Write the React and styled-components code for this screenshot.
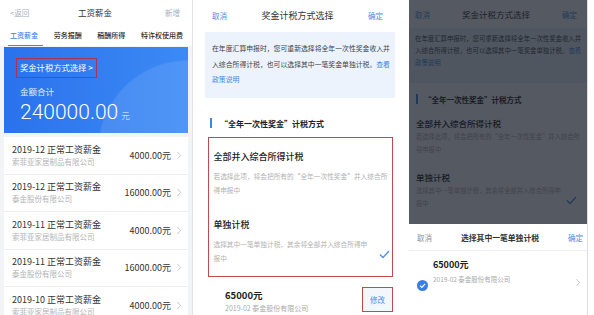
import React from 'react'
import styled, { createGlobalStyle } from 'styled-components'

const GlobalStyle = createGlobalStyle`
  html, body { margin: 0; padding: 0; background: #fff; }
  body { font-family: "Noto Sans CJK SC", "Noto Sans", sans-serif; }
`

const BLUE = '#3d86e6'
const MARK = '#bf4b50'

const Page = styled.div`
  width: 594px;
  height: 315px;
  overflow: hidden;
  display: flex;
  background: #fff;
`

const Line = styled.span`
  display: block;
  white-space: nowrap;
`

const Link = styled.span`
  color: ${BLUE};
`

/* ---------- shared nav ---------- */
const NavBar = styled.div`
  height: ${p => p.$h}px;
  flex-shrink: 0;
  display: grid;
  grid-template-columns: 1fr auto 1fr;
  align-items: center;
  padding: ${p => p.$pad};
  background: #fff;
  border-bottom: ${p => p.$line ? '1px solid #eee' : 'none'};
`

const NavSide = styled.span`
  font-size: 7.5px;
  color: ${p => p.$color};
  justify-self: ${p => p.$end ? 'end' : 'start'};
  white-space: nowrap;
`

const NavTitle = styled.span`
  font-size: ${p => p.$size}px;
  color: #333;
  font-weight: ${p => p.$bold ? 600 : 400};
  white-space: nowrap;
`

const Chevron = () => (
  <svg width="6" height="9" viewBox="0 0 6 9">
    <polyline points="1.5,1 4.5,4.5 1.5,8" fill="none" stroke="#c8c8c8" strokeWidth="1" />
  </svg>
)

/* ---------- panel 1: salary list ---------- */
const SalaryPhone = styled.div`
  width: 192px;
  height: 315px;
  flex-shrink: 0;
  background: #f3f4f6;
  border-right: 1px solid #e3e3e3;
  display: flex;
  flex-direction: column;
  overflow: hidden;
`

const Tabs = styled.div`
  height: 22px;
  flex-shrink: 0;
  background: #fff;
  display: flex;
  justify-content: space-between;
  align-items: center;
  padding: 0 9px 0 10px;
`

const Tab = styled.span`
  position: relative;
  font-size: 7px;
  line-height: 22px;
  white-space: nowrap;
  color: ${p => p.$active ? BLUE : '#2a2a2a'};
  font-weight: 500;
  &::after {
    content: '';
    display: ${p => p.$active ? 'block' : 'none'};
    position: absolute;
    left: -2px;
    right: -5px;
    bottom: 0;
    height: 1.5px;
    background: ${BLUE};
  }
`

const TotalCard = styled.div`
  margin: 1px 4px 0;
  height: 86px;
  flex-shrink: 0;
  box-sizing: border-box;
  padding: 5px 12px 0;
  color: #fff;
  background:
    radial-gradient(circle at 100% 120%, rgba(255,255,255,0.1) 0 42%, transparent 43%),
    linear-gradient(90deg, #2b72ec, #3b8af5);
`

const BonusLink = styled.div`
  display: inline-block;
  box-sizing: border-box;
  height: 20px;
  padding: 0 3px;
  border: 1.5px solid #a8345a;
  font-size: 8.3px;
  line-height: 17px;
  white-space: nowrap;
`

const TotalLabel = styled.div`
  margin-top: 6px;
  padding-left: 4px;
  font-size: 8.5px;
  line-height: 14px;
  opacity: 0.88;
`

const TotalAmount = styled.div`
  padding-left: 4px;
  font-family: Roboto, "Noto Sans", sans-serif;
  font-weight: 300;
  font-size: 21px;
  line-height: 28px;
  small {
    font-family: "Noto Sans CJK SC", sans-serif;
    font-size: 8.5px;
    margin-left: 3px;
    opacity: 0.9;
  }
`

const List = styled.div`
  margin: 4px 4px 0;
  background: #fff;
`

const Item = styled.div`
  height: 37.5px;
  box-sizing: border-box;
  display: flex;
  align-items: center;
  padding: 0 6px 0 8px;
  border-bottom: 1px solid #eeeeee;
`

const ItemText = styled.div`
  flex: 1;
  min-width: 0;
`

const ItemTitle = styled.div`
  font-size: 9px;
  line-height: 13px;
  color: #333;
  white-space: nowrap;
`

const ItemSub = styled.div`
  font-size: 7.5px;
  line-height: 12px;
  color: #b3b3b3;
  white-space: nowrap;
`

const ItemAmount = styled.span`
  font-size: 9px;
  color: #333;
  margin-right: 5px;
`

const salaries = [
  ['2019-12', '索菲亚家居制品有限公司', '4000.00元'],
  ['2019-12', '泰金股份有限公司', '16000.00元'],
  ['2019-11', '索菲亚家居制品有限公司', '4000.00元'],
  ['2019-11', '泰金股份有限公司', '16000.00元'],
  ['2019-10', '索菲亚家居制品有限公司', '4000.00元'],
]

function SalaryPanel() {
  return (
    <SalaryPhone>
      <NavBar $h={24} $pad="0 12px 0 10px">
        <NavSide $color="#a9b0b8">&lt;返回</NavSide>
        <NavTitle $size={8.5}>工资薪金</NavTitle>
        <NavSide $color="#a9b0b8" $end>新增</NavSide>
      </NavBar>
      <Tabs>
        <Tab $active>工资薪金</Tab>
        <Tab>劳务报酬</Tab>
        <Tab>稿酬所得</Tab>
        <Tab>特许权使用费</Tab>
      </Tabs>
      <TotalCard>
        <BonusLink>奖金计税方式选择 &gt;</BonusLink>
        <TotalLabel>金额合计</TotalLabel>
        <TotalAmount>240000.00<small>元</small></TotalAmount>
      </TotalCard>
      <List>
        {salaries.map(([month, company, amount], i) => (
          <Item key={i}>
            <ItemText>
              <ItemTitle>{month} 正常工资薪金</ItemTitle>
              <ItemSub>{company}</ItemSub>
            </ItemText>
            <ItemAmount>{amount}</ItemAmount>
            <Chevron />
          </Item>
        ))}
      </List>
    </SalaryPhone>
  )
}

/* ---------- panel 2: tax method ---------- */
const SchemePhone = styled.div`
  width: 195px;
  height: 315px;
  margin-left: 7px;
  flex-shrink: 0;
  background: #fff;
  display: flex;
  flex-direction: column;
  overflow: hidden;
`

const InfoBox = styled.div`
  flex-shrink: 0;
  box-sizing: border-box;
  background: #edf3fc;
  color: #444;
  margin: ${p => p.$compact ? '0' : '2px 0 0 5px'};
  height: ${p => p.$compact ? 55 : 66}px;
  padding: ${p => p.$compact ? '5px 0 0 6px' : '9px 0 0 7px'};
  font-size: ${p => p.$compact ? 6.4 : 6.85}px;
  line-height: ${p => p.$compact ? 12 : 15.5}px;
`

const SectionTitle = styled.div`
  flex-shrink: 0;
  display: flex;
  align-items: center;
  gap: ${p => p.$compact ? 6 : 8}px;
  height: 16px;
  margin-top: ${p => p.$compact ? 8 : 17}px;
  padding-left: ${p => p.$compact ? 7 : 10}px;
  font-size: ${p => p.$compact ? 7.5 : 8}px;
  font-weight: 600;
  color: #222;
  &::before {
    content: '';
    width: 2px;
    height: 10px;
    background: ${BLUE};
  }
`

const OptionBox = styled.div`
  margin: 6px 2px 0 8px;
  border: 1.5px solid ${MARK};
  flex-shrink: 0;
`

const Option = styled.div`
  display: flex;
  padding: ${p => p.$pad};
`

const OptionText = styled.div`
  flex: 1;
  min-width: 0;
`

const OptionTitle = styled.div`
  font-size: ${p => p.$compact ? 8.5 : 9}px;
  line-height: ${p => p.$compact ? 14 : 16}px;
  margin-bottom: ${p => p.$compact ? 0 : 4}px;
  font-weight: 500;
  color: #222;
`

const OptionSub = styled.div`
  font-size: ${p => p.$compact ? 6.3 : 6.7}px;
  line-height: ${p => p.$compact ? 13 : 14}px;
  color: #b2b2b2;
`

const CheckWrap = styled.div`
  margin-top: ${p => p.$top}px;
  width: 11px;
  height: 9px;
`

const Check = () => (
  <svg width="11" height="9" viewBox="0 0 11 9">
    <polyline points="1,4.5 4,7.5 10,1" fill="none" stroke="#4a8fe0" strokeWidth="1.3" />
  </svg>
)

const PickedRow = styled.div`
  display: flex;
  justify-content: space-between;
  align-items: flex-start;
  margin-top: 10px;
  padding: 0 2px 0 25px;
`

const PickedText = styled.div`
  margin-top: 1px;
`

const PickedAmount = styled.div`
  font-size: 9.5px;
  line-height: 14px;
  font-weight: 600;
  color: #222;
`

const PickedSub = styled.div`
  font-size: 7px;
  line-height: 12px;
  color: #aaa;
  white-space: nowrap;
`

const EditButton = styled.div`
  width: 31px;
  height: 25px;
  box-sizing: border-box;
  border: 1.5px solid ${MARK};
  background: #f3f6fb;
  display: flex;
  align-items: center;
  justify-content: center;
  font-size: 7.5px;
  color: #4a8fe0;
`

function SchemePanel() {
  return (
    <SchemePhone>
      <NavBar $h={30} $pad="0 12px">
        <NavSide $color="#4a8fe0">取消</NavSide>
        <NavTitle $size={9}>奖金计税方式选择</NavTitle>
        <NavSide $color="#4a8fe0" $end>确定</NavSide>
      </NavBar>
      <InfoBox>
        <Line>在年度汇算申报时，您可重新选择将全年一次性奖金收入并</Line>
        <Line>入综合所得计税，也可以选择其中一笔奖金单独计税。<Link>查看</Link></Line>
        <Line><Link>政策说明</Link></Line>
      </InfoBox>
      <SectionTitle>“全年一次性奖金”计税方式</SectionTitle>
      <OptionBox>
        <Option $pad="11px 2px 8px 4.5px">
          <OptionText>
            <OptionTitle>全部并入综合所得计税</OptionTitle>
            <OptionSub>
              <Line>若选择此项，将会把所有的“全年一次性奖金”并入综合所</Line>
              <Line>得申报中</Line>
            </OptionSub>
          </OptionText>
        </Option>
        <Option $pad="12px 2px 11px 4.5px">
          <OptionText>
            <OptionTitle>单独计税</OptionTitle>
            <OptionSub>
              <Line>选择其中一笔单独计税，其余将全部并入综合所得申</Line>
              <Line>报中</Line>
            </OptionSub>
          </OptionText>
          <CheckWrap $top={23}><Check /></CheckWrap>
        </Option>
      </OptionBox>
      <PickedRow>
        <PickedText>
          <PickedAmount>65000元</PickedAmount>
          <PickedSub>2019-02 泰金股份有限公司</PickedSub>
        </PickedText>
        <EditButton>修改</EditButton>
      </PickedRow>
    </SchemePhone>
  )
}

/* ---------- panel 3: bottom sheet ---------- */
const SheetPhone = styled.div`
  width: 178px;
  height: 315px;
  margin-left: 14px;
  flex-shrink: 0;
  border-right: 1px solid #ddd;
  background: #fff;
  display: flex;
  flex-direction: column;
  overflow: hidden;
`

const Behind = styled.div`
  position: relative;
  height: 224px;
  flex-shrink: 0;
  overflow: hidden;
  display: flex;
  flex-direction: column;
  background: #fff;
  &::after {
    content: '';
    position: absolute;
    inset: 0;
    background: rgba(22, 28, 38, 0.73);
  }
`

const DimOption = styled.div`
  display: flex;
  padding: 0 10px 0 7px;
  margin-top: ${p => p.$top}px;
`

const SheetItem = styled.div`
  display: flex;
  align-items: flex-start;
  padding: 7px 6px 0 8px;
`

const Radio = styled.div`
  margin-top: 13.5px;
  width: 11px;
  height: 11px;
  flex-shrink: 0;
`

const SheetText = styled.div`
  flex: 1;
  margin-left: 5px;
`

const SheetAmount = styled.div`
  font-size: 9px;
  line-height: 13px;
  font-weight: 600;
  color: #222;
`

const SheetSub = styled.div`
  margin-top: 2px;
  font-size: 6.5px;
  line-height: 12px;
  color: #aaa;
`

const SheetChevron = styled.div`
  margin-top: 10px;
`

function SheetPanel() {
  return (
    <SheetPhone>
      <Behind>
        <NavBar $h={28} $pad="0 10px 0 6px">
          <NavSide $color="#4a8fe0">取消</NavSide>
          <NavTitle $size={8.5}>奖金计税方式选择</NavTitle>
          <NavSide $color="#4a8fe0" $end>确定</NavSide>
        </NavBar>
        <InfoBox $compact>
          <Line>在年度汇算申报时，您可重新选择将全年一次性奖金收入并</Line>
          <Line>入综合所得计税，也可以选择其中一笔奖金单独计税。<Link>查看</Link></Line>
          <Line><Link>政策说明</Link></Line>
        </InfoBox>
        <SectionTitle $compact>“全年一次性奖金”计税方式</SectionTitle>
        <DimOption $top={9}>
          <OptionText>
            <OptionTitle $compact>全部并入综合所得计税</OptionTitle>
            <OptionSub $compact>
              <Line>若选择此项，将会把所有的“全年一次性奖金”并入综合所</Line>
              <Line>得申报中</Line>
            </OptionSub>
          </OptionText>
        </DimOption>
        <DimOption $top={14}>
          <OptionText>
            <OptionTitle $compact>单独计税</OptionTitle>
            <OptionSub $compact>
              <Line>选择其中一笔单独计税，其余将全部并入综合所得申</Line>
              <Line>报中</Line>
            </OptionSub>
          </OptionText>
          <CheckWrap $top={16}><Check /></CheckWrap>
        </DimOption>
      </Behind>
      <NavBar $h={26} $pad="0 4px 0 8px" $line>
        <NavSide $color="#8a8f96">取消</NavSide>
        <NavTitle $size={7.8} $bold>选择其中一笔单独计税</NavTitle>
        <NavSide $color="#4a8fe0" $end>确定</NavSide>
      </NavBar>
      <SheetItem>
        <Radio>
          <svg width="11" height="11" viewBox="0 0 11 11">
            <circle cx="5.5" cy="5.5" r="5.5" fill="#3b7de0" />
            <polyline points="3,5.6 4.9,7.4 8.1,3.8" fill="none" stroke="#fff" strokeWidth="1.2" />
          </svg>
        </Radio>
        <SheetText>
          <SheetAmount>65000元</SheetAmount>
          <SheetSub>2019-02 泰金股份有限公司</SheetSub>
        </SheetText>
        <SheetChevron><Chevron /></SheetChevron>
      </SheetItem>
    </SheetPhone>
  )
}

export default function App() {
  return (
    <>
      <GlobalStyle />
      <Page>
        <SalaryPanel />
        <SchemePanel />
        <SheetPanel />
      </Page>
    </>
  )
}
